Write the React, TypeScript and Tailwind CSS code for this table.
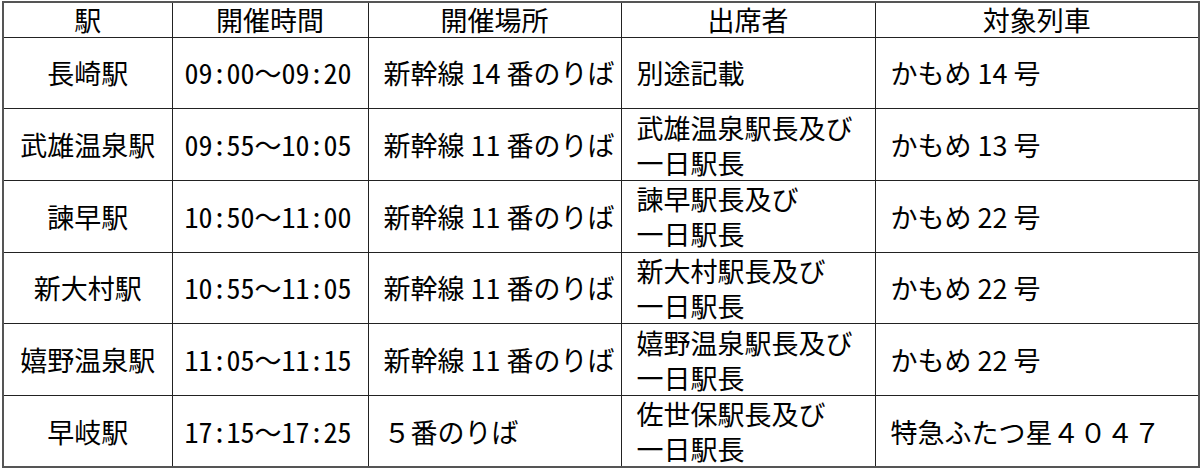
import React from "react";

type Row = {
  station: string;
  t1: string;
  t2: string;
  place: string;
  attendees: string[];
  train: string;
};

const rows: Row[] = [
  { station: "長崎駅", t1: "09:00", t2: "09:20", place: "新幹線 14 番のりば", attendees: ["別途記載"], train: "かもめ 14 号" },
  { station: "武雄温泉駅", t1: "09:55", t2: "10:05", place: "新幹線 11 番のりば", attendees: ["武雄温泉駅長及び", "一日駅長"], train: "かもめ 13 号" },
  { station: "諫早駅", t1: "10:50", t2: "11:00", place: "新幹線 11 番のりば", attendees: ["諫早駅長及び", "一日駅長"], train: "かもめ 22 号" },
  { station: "新大村駅", t1: "10:55", t2: "11:05", place: "新幹線 11 番のりば", attendees: ["新大村駅長及び", "一日駅長"], train: "かもめ 22 号" },
  { station: "嬉野温泉駅", t1: "11:05", t2: "11:15", place: "新幹線 11 番のりば", attendees: ["嬉野温泉駅長及び", "一日駅長"], train: "かもめ 22 号" },
  { station: "早岐駅", t1: "17:15", t2: "17:25", place: "５番のりば", attendees: ["佐世保駅長及び", "一日駅長"], train: "特急ふたつ星４０４７" },
];

const cell = "border border-[#222] p-0 align-middle";

export default function App() {
  return (
    <div className="w-[1200px] h-[470px] bg-white pt-px pl-[2px]">
      <table className="border-collapse table-fixed w-[1196px] text-black text-[27px] leading-[35px] [font-family:'Noto_Sans_CJK_JP','Noto_Sans_CJK_SC',sans-serif] border-2 border-[#555]">
        <colgroup>
          <col className="w-[169px]" />
          <col className="w-[196px]" />
          <col className="w-[253px]" />
          <col className="w-[254px]" />
          <col className="w-[324px]" />
        </colgroup>
        <thead>
          <tr className="h-[35px]">
            <th className={`${cell} font-normal text-center leading-[32px]`}>駅</th>
            <th className={`${cell} font-normal text-center leading-[32px]`}>開催時間</th>
            <th className={`${cell} font-normal text-center leading-[32px]`}>開催場所</th>
            <th className={`${cell} font-normal text-center leading-[32px]`}>出席者</th>
            <th className={`${cell} font-normal text-center leading-[32px]`}>対象列車</th>
          </tr>
        </thead>
        <tbody>
          {rows.map((r) => (
            <tr key={r.station} className="h-[71.7px]">
              <td className={`${cell} text-center`}>{r.station}</td>
              <td className={`${cell} text-center whitespace-nowrap pr-[4px]`}>
                <span className="[font-feature-settings:'hwid'] text-[28px]">{r.t1}</span>
                <span>～</span>
                <span className="[font-feature-settings:'hwid'] text-[28px]">{r.t2}</span>
              </td>
              <td className={`${cell} pl-[15px] whitespace-nowrap`}>{r.place}</td>
              <td className={`${cell} pl-[15px]`}>
                {r.attendees.map((a) => (
                  <div key={a}>{a}</div>
                ))}
              </td>
              <td className={`${cell} pl-[15px]`}>{r.train}</td>
            </tr>
          ))}
        </tbody>
      </table>
    </div>
  );
}
